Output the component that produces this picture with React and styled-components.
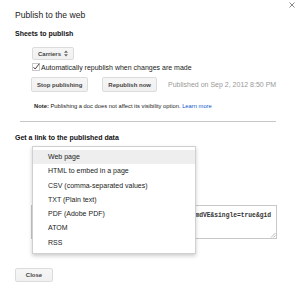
import React from 'react'
import styled, { createGlobalStyle } from 'styled-components';

const GlobalStyle = createGlobalStyle`
  html, body { margin: 0; padding: 0; background: #fff; }
  body { font-family: "Liberation Sans", Arial, sans-serif; }
`;

const formats = [
  'Web page',
  'HTML to embed in a page',
  'CSV (comma-separated values)',
  'TXT (Plain text)',
  'PDF (Adobe PDF)',
  'ATOM',
  'RSS',
];

const CloseIcon = () => (
  <svg width="6" height="6" viewBox="0 0 6 6">
    <path d="M0.5 0.5 L5.5 5.5 M5.5 0.5 L0.5 5.5" stroke="#888" strokeWidth="1" />
  </svg>
);

const SortArrows = () => (
  <svg width="4" height="7" viewBox="0 0 4 7">
    <path d="M0 2.8 L2 0.5 L4 2.8 Z M0 4.2 L2 6.5 L4 4.2 Z" fill="#666" />
  </svg>
);

const CheckBox = () => (
  <svg width="8" height="8" viewBox="0 0 8 8">
    <rect x="0.5" y="0.5" width="7" height="7" fill="#fff" stroke="#c8c8c8" />
    <path d="M1.5 4.2 L3.2 6 L7.2 0.8" fill="none" stroke="#444" strokeWidth="1" />
  </svg>
);

const Grip = () => (
  <svg width="6" height="6" viewBox="0 0 6 6">
    <path d="M5.5 1 L1 5.5 M5.5 3.5 L3.5 5.5" stroke="#aaa" strokeWidth="0.8" />
  </svg>
);

const App=()=>{
  return (
    <Dialog>
      <GlobalStyle />
      <Title>Publish to the web</Title>
      <CloseButton><CloseIcon /></CloseButton>

      <Heading>Sheets to publish</Heading>
      <Indent>
        <Button $small>Carriers <SortArrows /></Button>
        <CheckRow>
          <CheckBox />
          <span>Automatically republish when changes are made</span>
        </CheckRow>
        <ButtonRow>
          <Button>Stop publishing</Button>
          <Button>Republish now</Button>
          <Muted>Published on Sep 2, 2012 8:50 PM</Muted>
        </ButtonRow>
      </Indent>

      <Note><b>Note:</b> Publishing a doc does not affect its visibility option. <a>Learn more</a></Note>
      <Divider />

      <Heading $top={11}>Get a link to the published data</Heading>
      <LinkBlock>
        <UrlBox>
          <UrlText>spreadsheet/pub?key=0AkW2fJxC7hRmdVE&amp;single=true&amp;gid</UrlText>
          <GripCorner><Grip /></GripCorner>
        </UrlBox>
        <Menu>
          {formats.map((f, i) => (
            <MenuItem key={f} $active={i === 0}>{f}</MenuItem>
          ))}
        </Menu>
      </LinkBlock>

      <Footer>
        <Button $wide>Close</Button>
      </Footer>
    </Dialog>
  );
};

export default App;

const Dialog = styled.div`
  position: relative;
  width: 300px;
  height: 294px;
  box-sizing: border-box;
  padding: 10px 0 0 15px;
  background: #fff;
  overflow: hidden;
`;

const Title = styled.div`
  font-size: 8.6px;
  line-height: 10px;
  color: #222;
`;

const CloseButton = styled.div`
  position: absolute;
  top: 2px;
  right: 5px;
  width: 6px;
  height: 6px;
  display: flex;
`;

const Heading = styled.div`
  margin-top: ${p => p.$top ?? 9}px;
  font-size: 7px;
  line-height: 10px;
  font-weight: bold;
  color: #111;
`;

const Indent = styled.div`
  margin-left: 16px;
  padding-top: 8px;
  display: flex;
  flex-direction: column;
  align-items: flex-start;
`;

const Button = styled.div`
  display: inline-flex;
  align-items: center;
  justify-content: center;
  gap: 3px;
  box-sizing: border-box;
  height: ${p => (p.$small ? 13 : p.$wide ? 14 : 15)}px;
  min-width: ${p => (p.$wide ? 38 : 0)}px;
  padding: 0 5px;
  margin-left: ${p => (p.$small ? 1 : 0)}px;
  font-size: 6px;
  font-weight: bold;
  color: #444;
  background: linear-gradient(#f6f6f6, #f0f0f0);
  border: 1px solid #dcdcdc;
  border-radius: 2px;
  white-space: nowrap;
`;

const CheckRow = styled.div`
  margin-top: 2px;
  height: 10px;
  display: flex;
  align-items: center;
  gap: 1px;
  margin-left: 1px;
  font-size: 7px;
  color: #222;
  white-space: nowrap;
`;

const ButtonRow = styled.div`
  margin-top: 5px;
  display: flex;
  align-items: center;
  gap: 14px;
  & > span { margin-left: -3px; }
`;

const Muted = styled.span`
  font-size: 7px;
  color: #999;
  white-space: nowrap;
`;

const Note = styled.div`
  margin: 10px 0 0 19px;
  font-size: 5.8px;
  line-height: 8px;
  color: #222;
  white-space: nowrap;
  a { color: #15c; }
`;

const Divider = styled.div`
  margin: 11px 0 0 5px;
  width: 256px;
  height: 1px;
  background: #c6c6c6;
`;

const LinkBlock = styled.div`
  position: relative;
  margin-left: 16px;
  padding-top: 62px;
`;

const UrlBox = styled.div`
  position: relative;
  width: 246px;
  height: 34px;
  box-sizing: border-box;
  border: 1px solid #c8c8c8;
  padding: 6px 5px 0 3px;
  display: flex;
  justify-content: flex-end;
`;

const UrlText = styled.span`
  font-family: "Liberation Mono", "Courier New", monospace;
  font-weight: bold;
  font-size: 6.3px;
  line-height: 8px;
  color: #333;
  white-space: nowrap;
`;

const GripCorner = styled.div`
  position: absolute;
  right: 0;
  bottom: 0;
  display: flex;
`;

const Menu = styled.div`
  position: absolute;
  top: 3px;
  left: 1px;
  width: 164px;
  box-sizing: border-box;
  padding: 3px 0 3px;
  background: #fff;
  border: 1px solid #d0d0d0;
  box-shadow: 0 2px 4px rgba(0, 0, 0, 0.2);
`;

const MenuItem = styled.div`
  height: 14.3px;
  line-height: 14.3px;
  padding-left: 15px;
  font-size: 7px;
  color: #222;
  white-space: nowrap;
  background: ${p => (p.$active ? '#eeeeee' : 'transparent')};
`;

const Footer = styled.div`
  margin-top: 29px;
  display: flex;
`;
